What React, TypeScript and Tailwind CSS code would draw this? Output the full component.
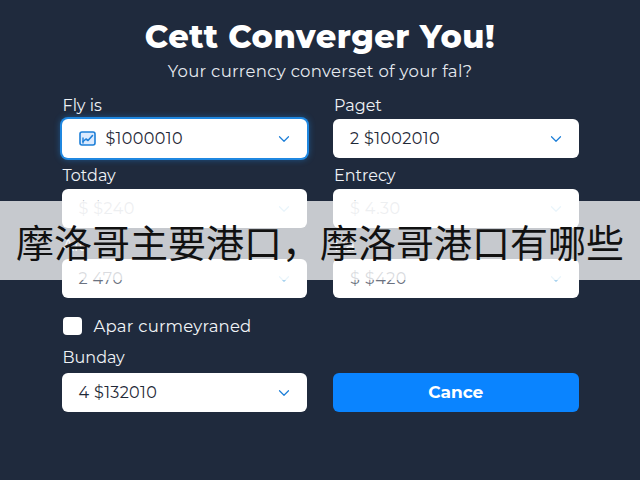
import React from 'react';
import { ChevronDown } from 'lucide-react';

const sans = "font-['Montserrat','Open_Sans','Liberation_Sans',sans-serif]";

// 小图标：带勾的方框
const TickIcon = () => (
  <svg width="17" height="15" viewBox="0 0 17 15" fill="none">
    <rect x="1" y="1" width="15" height="13" rx="2" fill="#dbeafe" stroke="#1d7fd8" strokeWidth="1.6" />
    <path d="M4 10.5 L7 8 L9 9.5 L13.5 4.5" stroke="#1d7fd8" strokeWidth="1.6" strokeLinecap="round" strokeLinejoin="round" />
    <path d="M4 12 L4 7" stroke="#1d7fd8" strokeWidth="1.4" strokeLinecap="round" />
  </svg>
);

interface FieldProps {
  label: string;
  value: string;
  muted?: 'light' | 'mid';
  focused?: boolean;
  icon?: boolean;
  className?: string;
}

const Field: React.FC<FieldProps> = ({ label, value, muted, focused, icon, className }) => {
  const textColor =
    muted === 'light' ? 'text-[#b9bec6]' : muted === 'mid' ? 'text-[#6b7280]' : 'text-[#1f2937]';
  const chevron = muted ? '#a9d3ef' : '#1d7fd8';
  return (
    <div className={className}>
      <div className="text-[16px] leading-5 text-[#eef1f5] mb-[3px] pl-[1px]">{label}</div>
      <div
        className={
          'h-[39px] bg-white rounded-[6px] flex items-center pl-[17px] pr-[14px] ' +
          (focused ? 'ring-2 ring-[#1f87e0] shadow-[0_0_6px_2px_rgba(31,135,224,0.45)]' : '')
        }
      >
        {icon && (
          <span className="mr-[10px] flex items-center">
            <TickIcon />
          </span>
        )}
        <span className={'flex-1 text-[16px] tracking-[0.4px] ' + textColor}>{value}</span>
        <ChevronDown size={18} strokeWidth={1.6} color={chevron} />
      </div>
    </div>
  );
};

export default function App() {
  return (
    <div className={'relative w-[640px] h-[480px] overflow-hidden bg-[#1f2a3d] ' + sans}>
      <div className="pt-[17px] text-center">
        <h1 className="text-[32px] leading-[40px] font-extrabold text-white tracking-[0.5px]">
          Cett Converger You!
        </h1>
        <p className="mt-[4px] text-[16.5px] leading-5 text-[#e5e9ef] tracking-[0.3px]">
          Your currency converset of your fal?
        </p>
      </div>

      <div className="w-[517px] mx-auto mt-[15px]">
        <div className="grid grid-cols-2 gap-x-[26px] gap-y-[8px]">
          <Field label="Fly is" value="$1000010" focused icon />
          <Field label="Paget" value="2  $1002010" />
          <Field label="Totday" value="$  $240" muted="light" />
          <Field label="Entrecy" value="$  4.30" muted="light" />
          <Field label="Ait" value="2  470" muted="mid" />
          <Field label="Ra" value="$  $420" muted="mid" />
        </div>

        <label className="mt-[18px] flex items-center gap-[12px] pl-[1px]">
          <span className="w-[19px] h-[18px] bg-white rounded-[4px]" />
          <span className="text-[16.5px] leading-5 text-[#f1f4f7] tracking-[0.2px]">Apar curmeyraned</span>
        </label>

        <div className="mt-[12px] grid grid-cols-2 gap-x-[26px] items-end">
          <Field label="Bunday" value="4  $132010" className="[&>div:first-child]:mb-[5px]" />
          <button className="h-[39px] rounded-[6px] bg-[#0a84ff] text-white font-bold text-[17px]">
            Cance
          </button>
        </div>
      </div>

      <div className="absolute left-0 right-0 top-[201px] h-[79px] bg-white/75 flex items-center justify-center">
        <span className="text-[38px] leading-none text-[#111] font-['Noto_Sans_CJK_SC',sans-serif]">
          摩洛哥主要港口，摩洛哥港口有哪些
        </span>
      </div>
    </div>
  );
}
